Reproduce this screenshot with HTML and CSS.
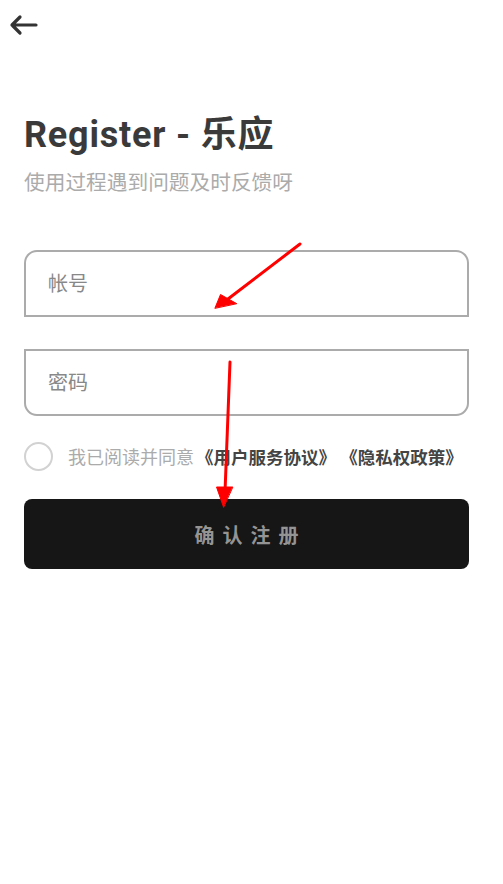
FILE: index.html
```html
<!DOCTYPE html>
<html lang="zh-CN">
<head>
    <meta charset="UTF-8">
    <meta name="viewport" content="width=device-width, initial-scale=1.0">
    <title>Register - 乐应</title>
    <link rel="stylesheet" href="styles.css">
</head>
<body>
    <div class="topbar">
        <button class="back-btn" type="button" aria-label="返回">
            <svg width="30" height="22" viewBox="0 0 30 22">
                <path d="M28 11H4M12 3L4 11L12 19" fill="none" stroke="#333" stroke-width="3.2" stroke-linecap="round" stroke-linejoin="round"/>
            </svg>
        </button>
    </div>

    <div class="container">
        <h1 class="title">Register - 乐应</h1>
        <p class="subtitle">使用过程遇到问题及时反馈呀</p>

        <form class="register-form">
            <div class="field-group">
                <input class="field field-top" type="text" placeholder="帐号">
                <input class="field field-bottom" type="password" placeholder="密码">
            </div>

            <label class="agree-row">
                <span class="check-circle"></span>
                <span class="agree-text">我已阅读并同意<b class="doc-link">《用户服务协议》</b><b class="doc-link">《隐私权政策》</b></span>
            </label>

            <button class="submit-btn" type="submit">确认注册</button>
        </form>
    </div>

    <!-- red annotation arrows over the screenshot -->
    <svg class="annotations" width="503" height="884" viewBox="0 0 503 884">
        <g fill="#f00" stroke="#f00" stroke-linecap="round">
            <line x1="300" y1="244" x2="228" y2="299" stroke-width="3"/>
            <polygon points="215,308 220.5,294.5 236.5,303.5" stroke-width="1" stroke-linejoin="round"/>
            <line x1="230" y1="362" x2="225" y2="492" stroke-width="3"/>
            <polygon points="223.5,507 216.5,487 232.5,487" stroke-width="1" stroke-linejoin="round"/>
        </g>
    </svg>
</body>
</html>
```

FILE: styles.css
```css
body {
    font-family: Roboto, "Noto Sans CJK SC", sans-serif;
    margin: 0;
    padding: 0;
    background-color: #fff;
    color: #3a3a3a;
}

.topbar {
    height: 50px;
    padding: 14px 0 0 8px;
    box-sizing: border-box;
}

.back-btn {
    border: none;
    background: none;
    padding: 0;
    display: block;
}

.container {
    padding: 0 34px 0 24px;
}

.title {
    margin: 64px 0 0;
    font-size: 36px;
    line-height: 42px;
    font-weight: 700;
    letter-spacing: 0.8px;
    color: #3a3a3a;
}

.subtitle {
    margin: 12px 0 0;
    font-size: 20.7px;
    line-height: 30px;
    color: #ababab;
}

.register-form {
    margin-top: 52px;
}

.field-group {
    display: flex;
    flex-direction: column;
    gap: 32px;
}

.field {
    height: 67px;
    box-sizing: border-box;
    border: 2px solid #ababab;
    padding: 0 22px;
    font-family: Roboto, "Noto Sans CJK SC", sans-serif;
    font-size: 20px;
    color: #333;
    outline: none;
}

.field::placeholder {
    color: #888;
}

.field-top {
    border-radius: 13px 13px 0 0;
}

.field-bottom {
    border-radius: 0 0 13px 13px;
}

.agree-row {
    display: flex;
    align-items: center;
    gap: 15px;
    margin-top: 25px;
    height: 30px;
}

.check-circle {
    width: 29px;
    height: 29px;
    box-sizing: border-box;
    border: 2px solid #d2d2d2;
    border-radius: 50%;
    flex-shrink: 0;
}

.agree-text {
    font-size: 18px;
    color: #ababab;
    white-space: nowrap;
}

.doc-link {
    color: #444;
    font-size: 17.5px;
    font-weight: 700;
    margin-left: 13px;
}

.doc-link:first-child {
    margin-left: 2px;
}

.submit-btn {
    display: block;
    width: 100%;
    height: 70px;
    margin-top: 28px;
    border: none;
    border-radius: 8px;
    background-color: #161616;
    color: #949494;
    font-family: Roboto, "Noto Sans CJK SC", sans-serif;
    font-size: 20px;
    font-weight: 700;
    letter-spacing: 8px;
    text-indent: 8px;
}

.annotations {
    position: absolute;
    top: 0;
    left: 0;
    pointer-events: none;
}
```
